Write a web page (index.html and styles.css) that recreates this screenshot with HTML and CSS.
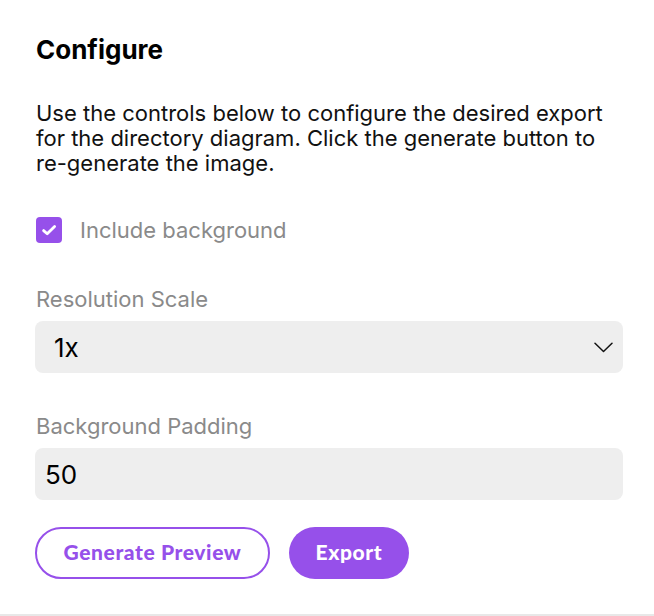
FILE: index.html
```html
<!DOCTYPE html>
<html>
<head>
<meta charset="utf-8">
<link rel="stylesheet" href="styles.css">
</head>
<body>
<div class="panel">
  <h2 class="title">Configure</h2>
  <p class="desc">Use the controls below to configure the desired export for the directory diagram. Click the generate button to re-generate the image.</p>
  <label class="check-row">
    <span class="checkbox">
      <svg width="26" height="26" viewBox="0 0 26 26"><path d="M7.6 13.6 L11.2 16.8 L18.6 9.4" fill="none" stroke="#fff" stroke-width="2.8" stroke-linecap="round" stroke-linejoin="round"/></svg>
    </span>
    <span class="check-label">Include background</span>
  </label>
  <div class="field field-first">
    <div class="field-label">Resolution Scale</div>
    <div class="select">
      <span class="value">1x</span>
      <svg class="chev" width="19" height="11" viewBox="0 0 19 11"><path d="M1 1.2 L9.5 9.5 L18 1.2" fill="none" stroke="#111" stroke-width="1.5" stroke-linecap="round" stroke-linejoin="round"/></svg>
    </div>
  </div>
  <div class="field field-second">
    <div class="field-label">Background Padding</div>
    <div class="input"><span class="value">50</span></div>
  </div>
  <div class="actions">
    <button class="btn btn-outline">Generate Preview</button>
    <button class="btn btn-solid">Export</button>
  </div>
</div>
</body>
</html>
```
FILE: styles.css
```css
html, body {
  margin: 0;
  padding: 0;
  background: #fff;
}
body {
  width: 654px;
  height: 616px;
  box-sizing: border-box;
  border-bottom: 2px solid #e8e8e8;
  font-family: Inter, "Liberation Sans", sans-serif;
  overflow: hidden;
}
.panel {
  padding: 33px 31px 0 35px;
}
.title {
  margin: 0;
  font-size: 26px;
  font-weight: 700;
  line-height: 34px;
  color: #000;
  padding-left: 1px;
}
.desc {
  margin: 34px 0 0 0;
  font-size: 22px;
  line-height: 25px;
  color: #111;
  padding-left: 1px;
}
.check-row {
  display: flex;
  align-items: center;
  gap: 18px;
  height: 26px;
  margin-top: 41px;
  padding-left: 1px;
}
.checkbox {
  width: 26px;
  height: 26px;
  border-radius: 4px;
  background: #9650ea;
  display: flex;
  align-items: center;
  justify-content: center;
  flex: none;
}
.check-label {
  font-size: 22px;
  color: #8a8a8a;
}
.field-first {
  margin-top: 42px;
}
.field-second {
  margin-top: 39px;
}
.field-label {
  font-size: 22px;
  line-height: 28px;
  color: #8a8a8a;
  padding-left: 1px;
  margin-bottom: 8px;
}
.select, .input {
  height: 52px;
  border-radius: 8px;
  background: #eeeeee;
  display: flex;
  align-items: center;
  box-sizing: border-box;
}
.select {
  padding: 0 10px 0 19px;
  justify-content: space-between;
}
.input {
  padding: 0 0 0 10px;
}
.value {
  font-size: 26px;
  color: #000;
}
.actions {
  display: flex;
  gap: 19px;
  margin-top: 27px;
}
.btn {
  height: 52px;
  border-radius: 26px;
  font-family: Lato, "Open Sans", sans-serif;
  font-weight: 900;
  font-size: 21px;
  letter-spacing: 0.6px;
  box-sizing: border-box;
  cursor: pointer;
  padding: 0 0 3px 0;
}
.btn-outline {
  width: 235px;
  background: #fff;
  color: #9650ea;
  border: 2px solid #9650ea;
}
.btn-solid {
  width: 120px;
  background: #9650ea;
  color: #fff;
  border: none;
}
```
